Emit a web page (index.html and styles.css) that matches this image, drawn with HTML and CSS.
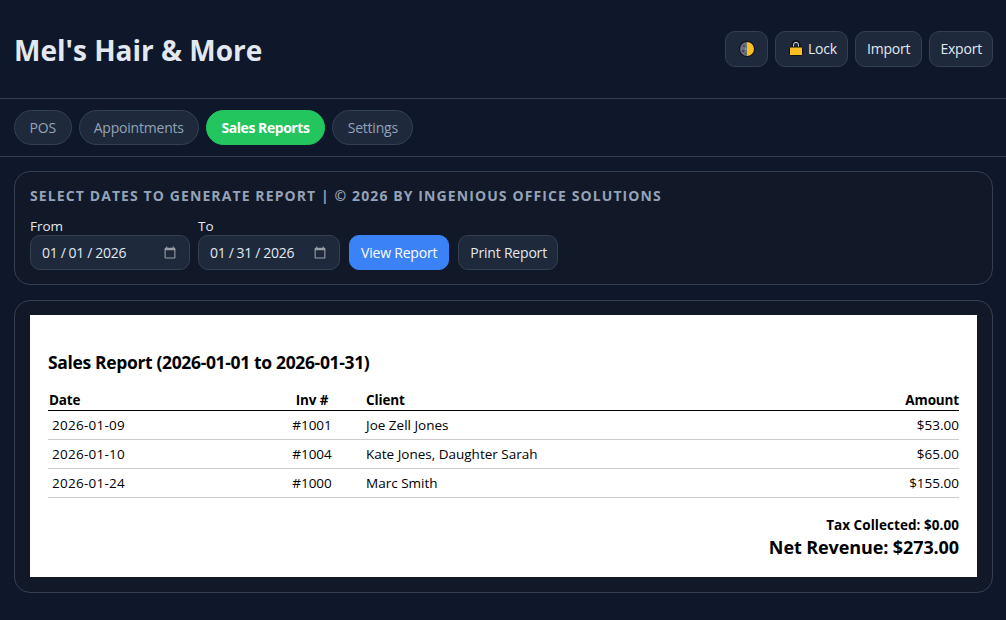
FILE: index.html
```html
<!DOCTYPE html>
<html lang="en">
<head>
<meta charset="utf-8">
<title>Mel's Hair &amp; More</title>
<link rel="stylesheet" href="styles.css">
</head>
<body>
<header class="topbar">
  <h1 class="brand">Mel's Hair &amp; More</h1>
  <div class="actions">
    <button class="btn btn-theme" aria-label="Theme">
      <svg class="icon" viewBox="0 0 16 16" width="16" height="16"><circle cx="8" cy="8" r="8" fill="#111"/><path d="M8 1a7 7 0 0 1 0 14z" fill="#fbbf24"/><path d="M8 1a7 7 0 0 0 0 14z" fill="#6b7280"/><circle cx="5" cy="5" r="1.1" fill="#3f4650"/><circle cx="4.2" cy="10" r="1.3" fill="#3f4650"/><circle cx="6.6" cy="8" r=".8" fill="#9ca3af"/><circle cx="6.5" cy="12.5" r=".7" fill="#3f4650"/></svg>
    </button>
    <button class="btn btn-lock">
      <svg class="icon" viewBox="0 0 14 16" width="14" height="16"><path d="M3.2 8V4.8a3.8 3.8 0 0 1 7.6 0V8" fill="none" stroke="#111" stroke-width="1.5"/><path d="M4.5 8V4.8a2.5 2.5 0 0 1 5 0V8" fill="none" stroke="#cbd5e1" stroke-width="1"/><rect x=".5" y="7" width="13" height="8.5" rx="1" fill="#fbbf24" stroke="#111" stroke-width="1"/></svg>
      Lock
    </button>
    <button class="btn">Import</button>
    <button class="btn btn-export">Export</button>
  </div>
</header>
<nav class="tabs">
  <button class="tab tab-pos">POS</button>
  <button class="tab tab-appointments">Appointments</button>
  <button class="tab tab-active">Sales Reports</button>
  <button class="tab">Settings</button>
</nav>
<main class="content">
  <section class="card card-filter">
    <h2 class="card-title">Select dates to generate report | © 2026 by Ingenious Office Solutions</h2>
    <div class="filter-row">
      <label class="field">From
        <input class="date date-from" type="date" value="2026-01-01">
      </label>
      <label class="field">To
        <input class="date date-to" type="date" value="2026-01-31">
      </label>
      <button class="btn btn-primary btn-form">View Report</button>
      <button class="btn btn-form btn-print">Print Report</button>
    </div>
  </section>
  <section class="card card-report">
    <div class="report">
      <h3 class="report-title">Sales Report (2026-01-01 to 2026-01-31)</h3>
      <table class="report-table">
        <thead>
          <tr><th class="col-date">Date</th><th class="col-inv">Inv #</th><th class="col-client">Client</th><th class="col-amount">Amount</th></tr>
        </thead>
        <tbody>
          <tr><td class="cell-date">2026-01-09</td><td class="col-inv">#1001</td><td class="col-client">Joe Zell Jones</td><td class="col-amount">$53.00</td></tr>
          <tr><td class="cell-date">2026-01-10</td><td class="col-inv">#1004</td><td class="col-client">Kate Jones, Daughter Sarah</td><td class="col-amount">$65.00</td></tr>
          <tr><td class="cell-date">2026-01-24</td><td class="col-inv">#1000</td><td class="col-client">Marc Smith</td><td class="col-amount">$155.00</td></tr>
        </tbody>
      </table>
      <div class="totals">
        <div class="tax">Tax Collected: $0.00</div>
        <div class="net">Net Revenue: $273.00</div>
      </div>
    </div>
  </section>
</main>
</body>
</html>
```
FILE: styles.css
```css
* { box-sizing: border-box; }
html, body { margin: 0; height: 100%; }
body {
  background: #0f172a;
  color: #e2e8f0;
  font-family: "Open Sans", "Noto Sans", sans-serif;
  font-size: 14px;
  overflow: hidden;
}
button, input { font-family: inherit; }
.topbar {
  height: 99px;
  display: flex;
  align-items: center;
  justify-content: space-between;
  padding: 0 13px 0 14px;
  border-bottom: 1px solid #334155;
}
.brand {
  margin: 2px 0 0;
  font-size: 28px;
  font-weight: 700;
  color: #e2e8f0;
}
.actions { display: flex; gap: 7px; }
.btn {
  height: 36px;
  padding: 0 11px;
  display: inline-flex;
  align-items: center;
  gap: 5px;
  background: #1e293b;
  border: 1px solid #334155;
  border-radius: 10px;
  color: #e2e8f0;
  font-size: 14px;
  letter-spacing: -0.2px;
}
.actions .btn { padding-bottom: 2px; }
.actions .btn-theme { width: 43px; justify-content: center; padding: 0; }
.actions .btn-lock { padding-left: 13px; padding-right: 10px; }
.actions .btn-export { padding-left: 10px; padding-right: 10px; }
.icon { display: block; flex: none; }
.tabs {
  height: 58px;
  padding: 11px 14px 0;
  display: flex;
  gap: 7.25px;
  align-items: flex-start;
  border-bottom: 1px solid #334155;
}
.tab {
  height: 35px;
  padding: 0 14.5px;
  background: #1e293b;
  border: 1px solid #334155;
  border-radius: 999px;
  color: #94a3b8;
  font-size: 14px;
  letter-spacing: -0.2px;
}
.tab-pos { width: 57.5px; padding: 0; }
.tab-appointments { width: 120px; padding: 0; }
.tab-active {
  background: #22c55e;
  border-color: #22c55e;
  color: #fff;
  font-weight: 700;
  letter-spacing: -0.45px;
}
.content { padding: 14px 13px 14px 14px; display: flex; flex-direction: column; gap: 15px; }
.card {
  background: #111827;
  border: 1px solid #334155;
  border-radius: 16px;
  padding: 14px 15px;
}
.card-filter { height: 114px; }
.card-report { height: 293px; }
.card-title {
  margin: 0 0 11px;
  font-size: 14px;
  line-height: 20px;
  font-weight: 700;
  text-transform: uppercase;
  letter-spacing: 1.1px;
  color: #94a3b8;
}
.filter-row { display: flex; align-items: flex-end; gap: 8px; }
.field { display: flex; flex-direction: column; font-size: 13.5px; line-height: 18px; color: #e2e8f0; }
.date {
  height: 35px;
  padding: 0 10px;
  background: #1e293b;
  border: 1px solid #334155;
  border-radius: 10px;
  color: #e2e8f0;
  font-size: 14px;
  color-scheme: dark;
  letter-spacing: -0.2px;
}
.date::-webkit-datetime-edit-text { padding: 0 2px; }
.date::-webkit-calendar-picker-indicator { opacity: 0.55; }
.date-from { width: 160px; }
.date-to { width: 142px; }
.btn-form { height: 35px; }
.btn-primary { background: #3b82f6; border-color: #3b82f6; color: #fff; margin-left: 1px; }
.btn-print { margin-left: 1px; padding: 0 10px 0 11px; }
.report {
  background: #fff;
  color: #000;
  height: 262px;
  padding: 18px 18px 0;
}
.report-title { margin: 18px 0 17px; font-size: 17.5px; line-height: 22px; font-weight: 700; letter-spacing: -0.35px; }
.report-table { width: 911px; border-collapse: collapse; table-layout: fixed; font-size: 13.5px; }
.report-table th { height: 20px; padding: 0 1px; font-weight: 700; text-align: left; border-bottom: 1px solid #000; letter-spacing: -0.15px; }
.report-table td { height: 29px; padding: 0 4px; border-bottom: 1px solid #ccc; }
.report-table .cell-date { letter-spacing: 0.25px; }
.report-table .col-date { width: 230px; }
.report-table .col-inv { width: 68px; text-align: center; }
.report-table .col-client { padding-left: 20px; }
.report-table .col-amount { width: 160px; text-align: right; padding-right: 0; }
.totals { margin-top: 18px; width: 911px; text-align: right; font-weight: 700; }
.tax { font-size: 13.5px; line-height: 18px; letter-spacing: 0.05px; }
.net { font-size: 18px; line-height: 26px; letter-spacing: -0.1px; }
```
